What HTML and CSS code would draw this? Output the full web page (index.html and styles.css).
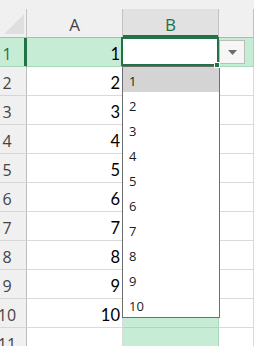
FILE: index.html
```html
<!DOCTYPE html>
<html>
<head>
<meta charset="utf-8">
<link rel="stylesheet" href="styles.css">
</head>
<body>
<div class="sheet">
  <div class="hdr">
    <div class="corner"><svg width="20" height="20" viewBox="0 0 20 20"><polygon points="0,20 20,20 20,0" fill="#dfdfdf"/></svg></div>
    <div class="ch">A</div>
    <div class="ch sel">B</div>
    <div class="ch"></div>
  </div>
  <div class="row">
    <div class="rh sel">1</div>
    <div class="c focus">1</div>
    <div class="c active">
      <div class="cursor"><div class="handle"></div></div>
      <div class="dd"><svg width="9" height="5" viewBox="0 0 9 5"><polygon points="0,0 9,0 4.5,5" fill="#6b6b6b"/></svg></div>
      <ul class="list">
        <li class="hl">1</li>
        <li>2</li>
        <li>3</li>
        <li>4</li>
        <li>5</li>
        <li>6</li>
        <li>7</li>
        <li>8</li>
        <li>9</li>
        <li>10</li>
      </ul>
    </div>
    <div class="c focus"></div>
  </div>
  <div class="row"><div class="rh">2</div><div class="c">2</div><div class="c focus"></div><div class="c"></div></div>
  <div class="row"><div class="rh">3</div><div class="c">3</div><div class="c focus"></div><div class="c"></div></div>
  <div class="row"><div class="rh">4</div><div class="c">4</div><div class="c focus"></div><div class="c"></div></div>
  <div class="row"><div class="rh">5</div><div class="c">5</div><div class="c focus"></div><div class="c"></div></div>
  <div class="row"><div class="rh">6</div><div class="c">6</div><div class="c focus"></div><div class="c"></div></div>
  <div class="row"><div class="rh">7</div><div class="c">7</div><div class="c focus"></div><div class="c"></div></div>
  <div class="row"><div class="rh">8</div><div class="c">8</div><div class="c focus"></div><div class="c"></div></div>
  <div class="row"><div class="rh">9</div><div class="c">9</div><div class="c focus"></div><div class="c"></div></div>
  <div class="row"><div class="rh">10</div><div class="c">10</div><div class="c focus"></div><div class="c"></div></div>
  <div class="row"><div class="rh">11</div><div class="c"></div><div class="c focus"></div><div class="c"></div></div>
</div>
</body>
</html>
```
FILE: styles.css
```css
* { box-sizing: border-box; margin: 0; padding: 0; }
html, body { width: 254px; height: 346px; overflow: hidden; background: #fff; }
body { font-family: "Open Sans", sans-serif; }

.sheet { margin-left: -12px; width: 266px; }

.hdr {
  display: grid;
  grid-template-columns: 39px 96px 96px 1fr;
  padding-top: 9px;
  background: #f0f0f0;
}
.hdr > div {
  height: 29px;
  border-bottom: 1px solid #b5b5b5;
  border-right: 1px solid #c2c2c2;
  display: flex;
  align-items: flex-end;
  justify-content: center;
  padding-bottom: 1px;
  font-size: 17px;
  line-height: normal;
  color: #444;
}
.hdr .corner { justify-content: flex-end; padding: 0 2px 3px 0; }
.hdr .ch.sel { background: #e1e1e1; color: #217346; box-shadow: inset 0 -2px 0 #217346; }

.row {
  display: grid;
  grid-template-columns: 39px 96px 96px 1fr;
  height: 29px;
}
.rh {
  background: #f0f0f0;
  border-right: 1px solid #bdbdbd;
  border-bottom: 1px solid #d6d6d6;
  display: flex;
  align-items: flex-end;
  justify-content: center;
  padding-bottom: 1px;
  font-size: 16px;
  line-height: normal;
  color: #444;
}
.rh.sel { background: #c6ecd5; color: #217346; box-shadow: inset -2px 0 0 #217346; border-right-color: #217346; border-bottom-color: #a9d9bb; }

.c {
  border-right: 1px solid #dadada;
  border-bottom: 1px solid #dadada;
  display: flex;
  align-items: flex-end;
  justify-content: flex-end;
  padding: 0 2px 2px 0;
  font-family: Lato, sans-serif;
  font-size: 16.5px;
  line-height: normal;
  color: #000;
}
.c.focus { background: #c6ecd5; border-color: #a9d9bb; }
.c.active { position: relative; background: #fff; }

.cursor {
  position: absolute;
  left: -2px;
  top: -1px;
  width: 98px;
  height: 29px;
  border: 2px solid #217346;
  z-index: 4;
}
.handle {
  position: absolute;
  right: -3px;
  bottom: -4px;
  width: 6px;
  height: 6px;
  background: #217346;
  border: 1px solid #fff;
}
.dd {
  position: absolute;
  left: 96px;
  top: 2px;
  width: 26px;
  height: 24px;
  border: 1px solid #bcbcbc;
  background: #f6f6f6;
  display: flex;
  align-items: center;
  justify-content: center;
  z-index: 3;
}
.list {
  position: absolute;
  left: -1px;
  top: 28px;
  width: 98px;
  border: 1px solid #6e6e6e;
  background: #fff;
  list-style: none;
  z-index: 3;
  font-family: "Open Sans", sans-serif;
  font-size: 13px;
  color: #1b1b1b;
}
.list li { height: 25px; padding: 3px 0 0 6px; line-height: 22px; }
.list li.hl { background: #d4d4d4; }
```
